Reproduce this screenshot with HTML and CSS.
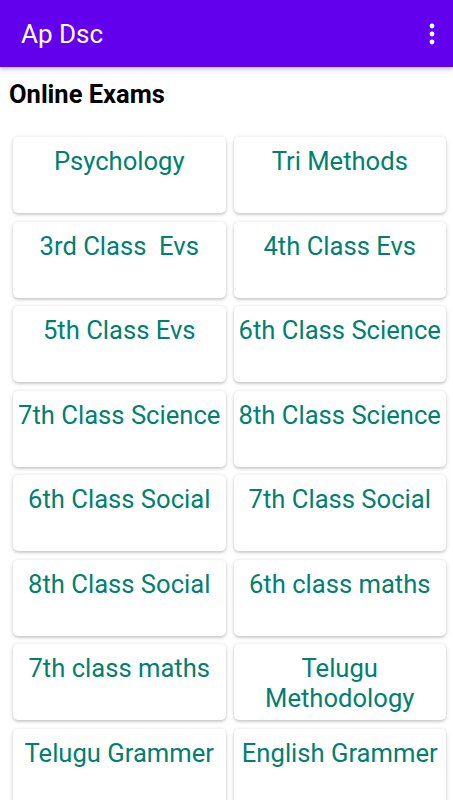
FILE: index.html
```html
<!DOCTYPE html>
<html>
<head>
<meta charset="utf-8">
<link rel="stylesheet" href="styles.css">
</head>
<body>
<header class="appbar">
  <span class="title">Ap Dsc</span>
  <svg class="menu" width="8" height="24" viewBox="0 0 8 24">
    <circle cx="4" cy="4" r="2.4" fill="#fff"/>
    <circle cx="4" cy="12" r="2.4" fill="#fff"/>
    <circle cx="4" cy="20" r="2.4" fill="#fff"/>
  </svg>
</header>
<main class="content">
  <h1 class="heading">Online Exams</h1>
  <div class="grid">
    <div class="card">Psychology</div>
    <div class="card">Tri Methods</div>
    <div class="card">3rd Class&nbsp; Evs</div>
    <div class="card">4th Class Evs</div>
    <div class="card">5th Class Evs</div>
    <div class="card">6th Class Science</div>
    <div class="card">7th Class Science</div>
    <div class="card">8th Class Science</div>
    <div class="card">6th Class Social</div>
    <div class="card">7th Class Social</div>
    <div class="card">8th Class Social</div>
    <div class="card">6th class maths</div>
    <div class="card">7th class maths</div>
    <div class="card">Telugu Methodology</div>
    <div class="card">Telugu Grammer</div>
    <div class="card">English Grammer</div>
  </div>
</main>
</body>
</html>
```

FILE: styles.css
```css
html, body {
  margin: 0;
  padding: 0;
  background: #ffffff;
  font-family: Roboto, "Noto Sans", sans-serif;
  overflow: hidden;
  height: 800px;
}

.appbar {
  height: 67px;
  background: #6200ee;
  display: flex;
  align-items: center;
  justify-content: space-between;
  padding: 0 17px 0 21px;
  box-shadow: 0 2px 4px rgba(0, 0, 0, 0.28);
  position: relative;
  z-index: 2;
}

.title {
  color: #ffffff;
  font-size: 26px;
  margin-top: 1px;
}

.menu {
  display: block;
  margin-top: 1px;
}

.content {
  padding: 0 7px 0 13px;
}

.heading {
  margin: 0 0 0 -4px;
  padding: 13px 0 0 0;
  font-size: 25.5px;
  font-weight: bold;
  color: #000;
  line-height: 28px;
  height: 70px;
  box-sizing: border-box;
}

.grid {
  display: grid;
  grid-template-columns: 1fr 1fr;
  column-gap: 8px;
  row-gap: 8.5px;
}

.card {
  height: 76px;
  box-sizing: border-box;
  background: #fff;
  border-radius: 5px;
  box-shadow: 0 1px 4px rgba(0, 0, 0, 0.2), 0 2px 2px rgba(0, 0, 0, 0.08);
  color: #017f6f;
  font-size: 25.6px;
  line-height: 30px;
  text-align: center;
  padding: 9px 0 0 0;
  white-space: normal;
}
```
